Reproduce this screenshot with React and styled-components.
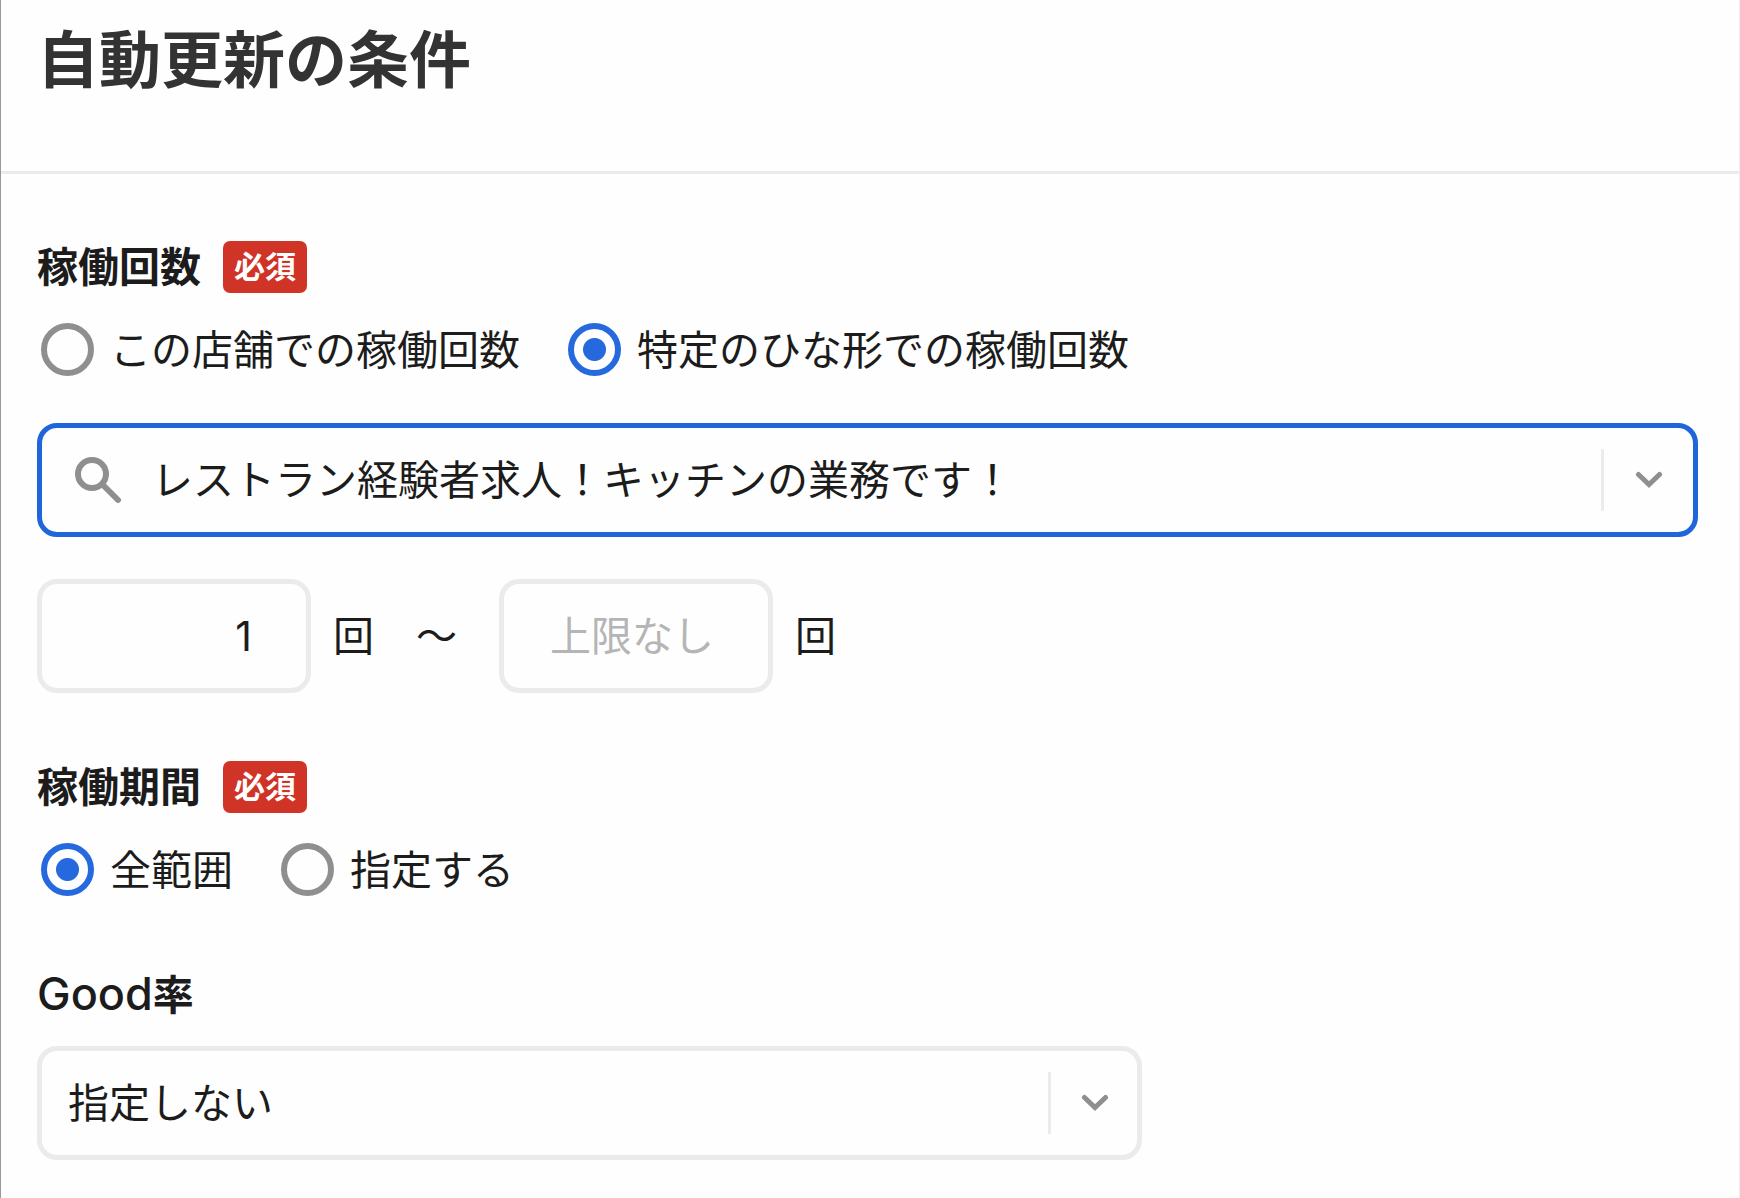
import React, { useState } from 'react'
import styled, { createGlobalStyle } from 'styled-components'

function App() {
    const [countScope, setCountScope] = useState('template')
    const [period, setPeriod] = useState('all')
    const [template, setTemplate] = useState('レストラン経験者求人！キッチンの業務です！')
    const [min, setMin] = useState('1')
    const [max, setMax] = useState('')

    return (
        <>
            <GlobalStyle />
            <Page>
                <Header>
                    <Title>自動更新の条件</Title>
                </Header>
                <Content>
                    <Section>
                        <LabelRow>
                            <Label id="count-label">稼働回数</Label>
                            <Badge>必須</Badge>
                        </LabelRow>
                        <RadioGroup role="radiogroup" aria-labelledby="count-label">
                            <RadioOption name="count" label="この店舗での稼働回数" checked={countScope === 'shop'} onChange={() => setCountScope('shop')} />
                            <RadioOption name="count" label="特定のひな形での稼働回数" checked={countScope === 'template'} onChange={() => setCountScope('template')} />
                        </RadioGroup>
                        <SearchBox>
                            <SearchIcon />
                            <SearchInput type="text" aria-label="ひな形を検索" value={template} onChange={(e) => setTemplate(e.target.value)} />
                            <ArrowButton type="button" aria-label="候補を開く">
                                <Divider />
                                <ChevronIcon />
                            </ArrowButton>
                        </SearchBox>
                        <RangeRow>
                            <RangeField>
                                <NumberInput type="text" inputMode="numeric" aria-label="下限" value={min} onChange={(e) => setMin(e.target.value)} />
                                <span>回</span>
                            </RangeField>
                            <span>〜</span>
                            <RangeField>
                                <NumberInput type="text" inputMode="numeric" aria-label="上限" placeholder="上限なし" value={max} onChange={(e) => setMax(e.target.value)} />
                                <span>回</span>
                            </RangeField>
                        </RangeRow>
                    </Section>

                    <Section>
                        <LabelRow>
                            <Label id="period-label">稼働期間</Label>
                            <Badge>必須</Badge>
                        </LabelRow>
                        <RadioGroup role="radiogroup" aria-labelledby="period-label">
                            <RadioOption name="period" label="全範囲" checked={period === 'all'} onChange={() => setPeriod('all')} />
                            <RadioOption name="period" label="指定する" checked={period === 'custom'} onChange={() => setPeriod('custom')} />
                        </RadioGroup>
                    </Section>

                    <Section>
                        <PlainLabelRow>
                            <Label as="label" htmlFor="good-rate"><Latin>Good</Latin>率</Label>
                        </PlainLabelRow>
                        <SelectBox>
                            <Select id="good-rate" defaultValue="none">
                                <option value="none">指定しない</option>
                                <option value="80">80%以上</option>
                                <option value="90">90%以上</option>
                            </Select>
                            <SelectArrow>
                                <Divider />
                                <ChevronIcon />
                            </SelectArrow>
                        </SelectBox>
                    </Section>
                </Content>
            </Page>
        </>
    )
}

function RadioOption({ name, label, checked, onChange }) {
    return (
        <RadioLabel>
            <Radio type="radio" name={name} checked={checked} onChange={onChange} />
            {label}
        </RadioLabel>
    )
}

function SearchIcon() {
    return (
        <svg width="48" height="48" viewBox="0 0 48 48" fill="none" stroke="#8f8f8f" strokeLinecap="round" aria-hidden="true">
            <circle cx="18" cy="18" r="14" strokeWidth="6" />
            <path d="M29 29L44 44" strokeWidth="6" />
        </svg>
    )
}

function ChevronIcon() {
    return (
        <Chevron width="28" height="18" viewBox="0 0 28 18" fill="none" stroke="#8f8f8f" strokeWidth="5" strokeLinecap="round" strokeLinejoin="miter" aria-hidden="true">
            <path d="M3.5 3.5L14 13.5L24.5 3.5" />
        </Chevron>
    )
}

const GlobalStyle = createGlobalStyle`
    * {
        box-sizing: border-box;
    }

    body {
        margin: 0;
        background: #fefefe;
        color: #1c1c1c;
        font-family: Inter, "Noto Sans CJK JP", sans-serif;
        font-size: 41px;
        line-height: 52px;
    }

    input, select, button {
        font: inherit;
        color: inherit;
    }
`;

const Page = styled.main`
    min-height: 100vh;
    border-left: 1px solid #999;
    border-right: 1px solid #eee;
`;

const Header = styled.header`
    padding: 24px 36px 73px;
    border-bottom: 3px solid #ebebeb;
`;

const Title = styled.h1`
    margin: 0;
    color: #333;
    font-size: 62px;
    font-weight: 700;
    line-height: 74px;
`;

const Content = styled.div`
    display: flex;
    flex-direction: column;
    gap: 68px;
    padding: 67px 41px 36px 36px;
`;

const Section = styled.section`
    display: flex;
    flex-direction: column;
`;

const LabelRow = styled.div`
    display: flex;
    align-items: center;
    gap: 22px;
    margin-bottom: 30px;
`;

const PlainLabelRow = styled(LabelRow)`
    min-height: 60px;
    margin-bottom: 22px;
`;

const Label = styled.span`
    font-weight: 700;
`;

const Latin = styled.span`
    font-size: 45px;
    font-weight: 500;
`;

const Badge = styled.span`
    padding: 0 11px;
    border-radius: 7px;
    background: #d03427;
    color: #fff;
    font-size: 31px;
    font-weight: 700;
`;

const RadioGroup = styled.div`
    display: flex;
    flex-wrap: wrap;
    gap: 48px;
    padding-left: 4px;
`;

const RadioLabel = styled.label`
    display: flex;
    align-items: center;
    gap: 16px;
`;

const Radio = styled.input`
    appearance: none;
    width: 53px;
    height: 53px;
    margin: 0;
    border: 6px solid #8f8f8f;
    border-radius: 50%;

    &:checked {
        border-color: #2669de;
        background: radial-gradient(circle, #2669de 11px, transparent 12px);
    }
`;

const SearchBox = styled.div`
    display: flex;
    align-items: center;
    height: 114px;
    margin: 47px 0 42px;
    padding-left: 32px;
    border: 5px solid #1f66da;
    border-radius: 20px;
`;

const SearchInput = styled.input`
    flex: 1;
    min-width: 0;
    margin-left: 30px;
    padding: 0;
    border: 0;
    outline: 0;
    background: transparent;
`;

const ArrowButton = styled.button`
    display: flex;
    align-items: center;
    width: 92px;
    padding: 0;
    border: 0;
    background: transparent;
`;

const Divider = styled.span`
    width: 3px;
    height: 62px;
    background: #ebebeb;
`;

const Chevron = styled.svg`
    margin: 0 auto;
`;

const RangeRow = styled.div`
    display: flex;
    align-items: center;
    gap: 42px;
`;

const RangeField = styled.label`
    display: flex;
    align-items: center;
    gap: 22px;
`;

const NumberInput = styled.input`
    width: 274px;
    height: 114px;
    padding: 0 54px 0 20px;
    border: 5px solid #ebebeb;
    border-radius: 20px;
    background: transparent;
    text-align: right;

    &::placeholder {
        color: #b5b5b5;
        opacity: 1;
    }
`;

const SelectBox = styled.div`
    position: relative;
    width: 66.5%;
`;

const Select = styled.select`
    appearance: none;
    display: block;
    width: 100%;
    height: 114px;
    padding: 0 100px 0 26px;
    border: 5px solid #ebebeb;
    border-radius: 20px;
    background: transparent;
`;

/* sits over the select and lets clicks through */
const SelectArrow = styled.span`
    position: absolute;
    top: 0;
    right: 2px;
    bottom: 0;
    display: flex;
    align-items: center;
    width: 92px;
    pointer-events: none;
`;

export default App
